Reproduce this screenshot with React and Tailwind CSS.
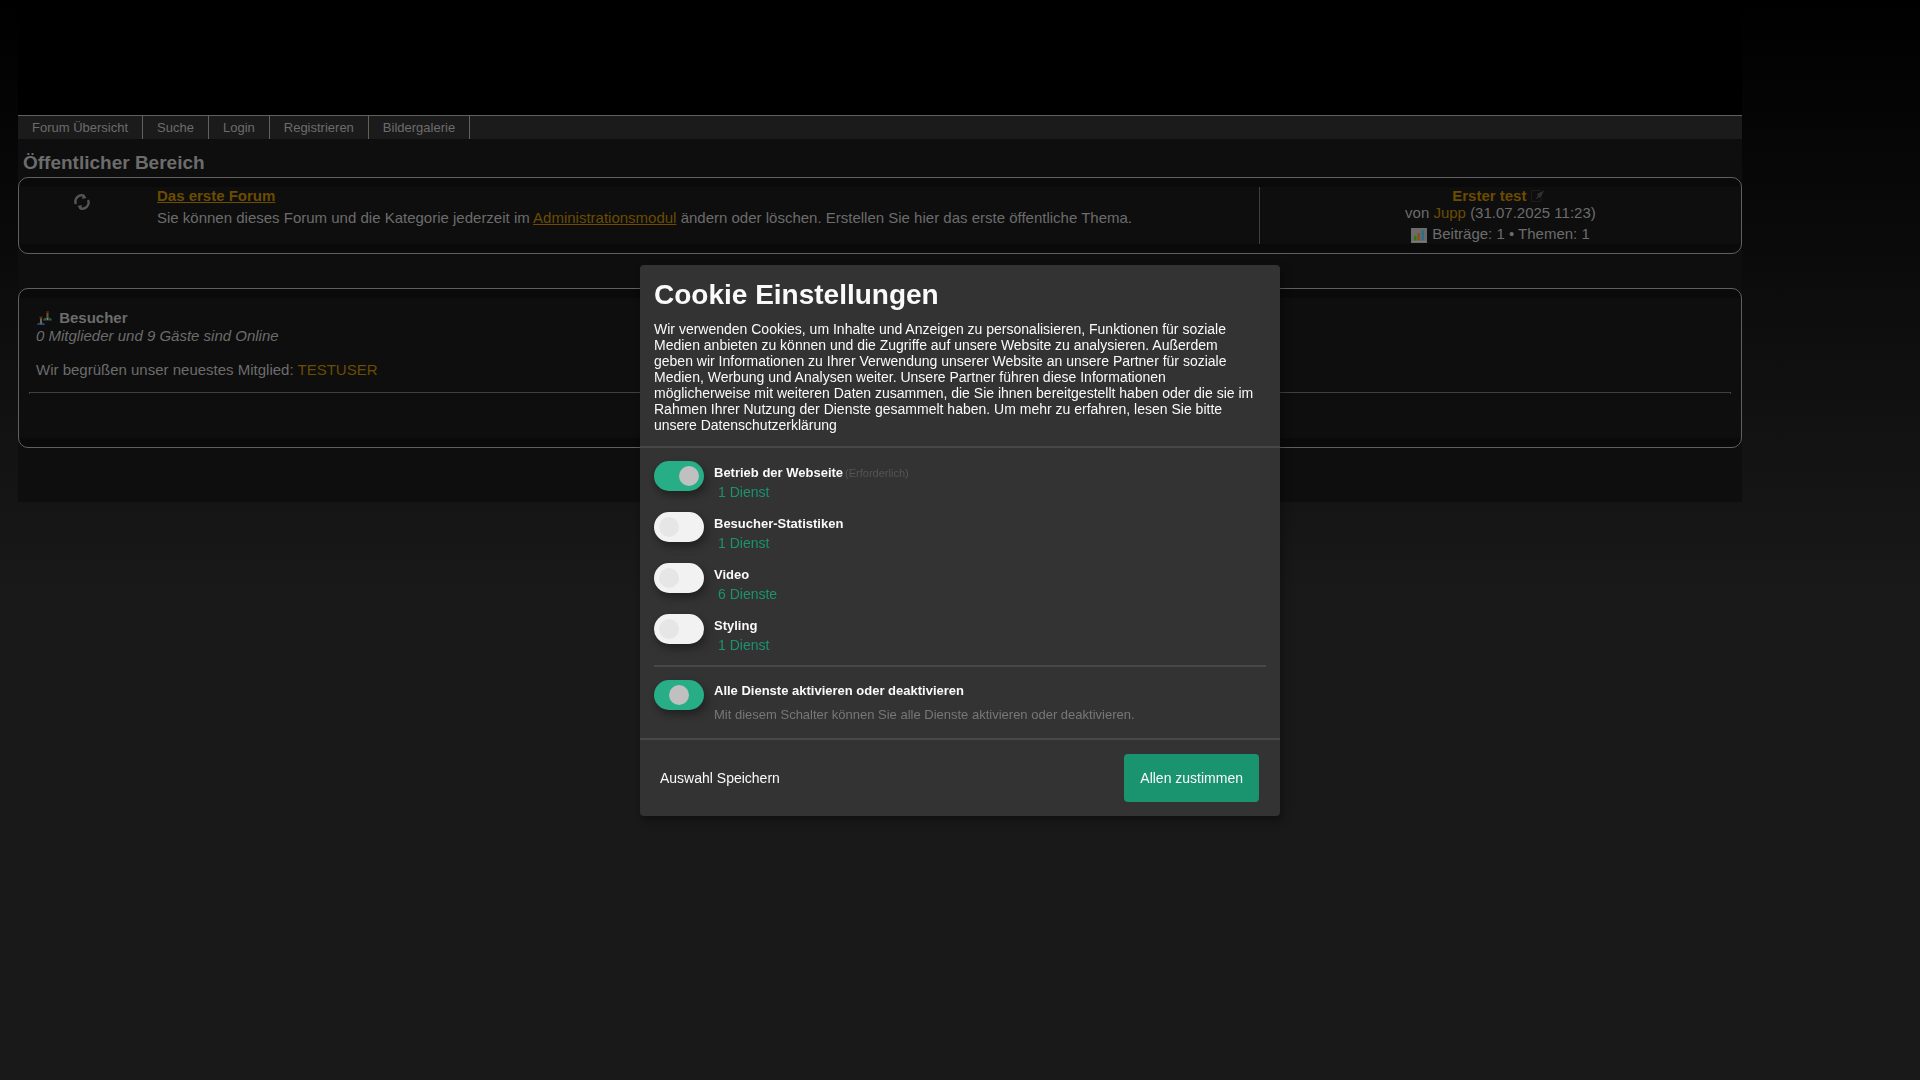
import { useState } from "react";

const navItems = ["Forum Übersicht", "Suche", "Login", "Registrieren", "Bildergalerie"];

const purposes = [
  { id: "operation", title: "Betrieb der Webseite", services: "1 Dienst", required: true },
  { id: "statistics", title: "Besucher-Statistiken", services: "1 Dienst" },
  { id: "video", title: "Video", services: "6 Dienste" },
  { id: "styling", title: "Styling", services: "1 Dienst" },
];

function RefreshIcon() {
  return (
    <svg width="16" height="16" viewBox="0 0 16 16" fill="none" stroke="#555" strokeWidth="2.4" aria-hidden="true">
      <path d="M2 10A6 6 0 0 1 10.500 2.300" />
      <path d="M14 6A6 6 0 0 1 5.500 13.700" />
      <path d="M9.500 0l3 4-4.500 1zM6.500 16l-3-4 4.500-1z" fill="#555" stroke="none" />
    </svg>
  );
}

function EditIcon() {
  return (
    <svg width="18" height="12" viewBox="0 0 18 12" className="inline-block align-[-1px]" aria-hidden="true">
      <path d="M9.500 .5H.5v11h9.500V8" fill="none" stroke="#1c1c1c" />
      <path d="M13 .5L6 4l1 1.500L4.500 9.500 8.500 7l1 1z" fill="#303030" />
    </svg>
  );
}

function ChartIcon() {
  return (
    <svg width="16" height="15" viewBox="0 0 16 15" className="mr-px inline-block align-[-4px]" aria-hidden="true">
      <path d="M0 0h16v15H0z" fill="#6b6b6b" />
      <path d="M1 13.500h14" stroke="#7c7c7c" />
      <path d="M3 8h2.500v4.500H3z" fill="#2a7d0c" />
      <path d="M6.500 5H9v7.500H6.500z" fill="#944a10" />
      <path d="M10.500 2H13v10.500h-2.500z" fill="#2b6f8a" />
    </svg>
  );
}

function VisitorsIcon() {
  return (
    <svg width="17" height="14" viewBox="0 0 17 14" className="inline-block align-[-2px]" aria-hidden="true">
      <path d="M7 9.500C7 7.500 9 6.500 11.500 6.500s4.500 1 4.500 3z" fill="#285a40" />
      <path d="M1 14c0-2 2-2.500 4-2.500S9 12 9 14z" fill="#1c4474" />
      <path d="M10.500 1.500h2V7h-2z" fill="#7a4c34" />
      <path d="M10 0h3v2h-3z" fill="#471e14" />
      <path d="M4 6.500h2V12H4z" fill="#80603a" />
      <path d="M3.500 5.500h3v2h-3z" fill="#4a3318" />
      <path d="M11 7h1v2h-1zM4.500 11.500h1v2h-1z" fill="#7c7c7c" />
    </svg>
  );
}

function Switch({ id, checked, half, disabled, onChange }) {
  return (
    <input
      id={id}
      type="checkbox"
      role="switch"
      checked={checked}
      disabled={disabled}
      onChange={onChange}
      className={`h-[30px] w-[50px] shrink-0 appearance-none rounded-full p-[5px] shadow-[0_4px_6px_rgba(0,0,0,0.2),5px_5px_10px_rgba(0,0,0,0.19)] before:block before:size-5 before:rounded-full ${
        checked || half ? "bg-[#27ae86] before:bg-[#c0c0c0]" : "bg-[#f2f2f2] before:bg-[#e6e6e6]"
      } ${half ? "before:ml-[10px]" : checked ? "before:ml-[20px]" : ""}`}
    />
  );
}

function CookieModal() {
  const [enabled, setEnabled] = useState({ operation: true });

  const toggle = (id) => setEnabled({ ...enabled, [id]: !enabled[id] });
  const count = purposes.filter((p) => enabled[p.id]).length;
  const all = count === purposes.length;
  const acceptAll = () => setEnabled(Object.fromEntries(purposes.map((p) => [p.id, true])));

  return (
    <div className="fixed inset-0 flex items-center justify-center">
      <div
        role="dialog"
        aria-labelledby="cookie-title"
        className="w-full max-w-[640px] rounded bg-[#333] text-sm text-[#fafafa] shadow-[0_4px_6px_rgba(0,0,0,0.2),5px_5px_10px_rgba(0,0,0,0.19)]"
      >
        <div className="border-b-2 border-[#484848] px-[14px] pt-[14px] pb-[13px]">
          <h1 id="cookie-title" className="text-[28px] leading-8 font-bold">
            Cookie Einstellungen
          </h1>
          <p className="mt-[10px] pr-[10px] leading-4">
            Wir verwenden Cookies, um Inhalte und Anzeigen zu personalisieren, Funktionen für soziale Medien anbieten
            zu können und die Zugriffe auf unsere Website zu analysieren. Außerdem geben wir Informationen zu Ihrer
            Verwendung unserer Website an unsere Partner für soziale Medien, Werbung und Analysen weiter. Unsere
            Partner führen diese Informationen möglicherweise mit weiteren Daten zusammen, die Sie ihnen bereitgestellt
            haben oder die sie im Rahmen Ihrer Nutzung der Dienste gesammelt haben. Um mehr zu erfahren, lesen Sie
            bitte unsere Datenschutzerklärung
          </p>
        </div>

        <div className="border-b-2 border-[#484848] px-[14px] pt-[13px] pb-[15px]">
          <ul>
            {purposes.map((p) => (
              <li key={p.id} className="flex h-[51px] gap-[10px]">
                <Switch
                  id={p.id}
                  checked={!!enabled[p.id]}
                  disabled={p.required}
                  onChange={() => toggle(p.id)}
                />
                <div className="pt-1">
                  <label htmlFor={p.id} className="block text-[13px] leading-4 font-bold">
                    {p.title}
                    {p.required && <span className="pl-[2px] text-[11px] font-normal text-[#555]">(Erforderlich)</span>}
                  </label>
                  <a href="#" className="mt-[2px] ml-1 block leading-[18px] text-[#1a936f]">
                    {p.services}
                  </a>
                </div>
              </li>
            ))}
          </ul>
          <div className="flex gap-[10px] border-t-2 border-[#484848] pt-[13px]">
            <Switch
              id="all"
              checked={all}
              half={count > 0 && !all}
              onChange={() => (all ? setEnabled({ operation: true }) : acceptAll())}
            />
            <div className="pt-[3px] text-[13px]">
              <label htmlFor="all" className="block leading-4 font-bold">
                Alle Dienste aktivieren oder deaktivieren
              </label>
              <p className="mt-2 leading-4 text-[#777]">
                Mit diesem Schalter können Sie alle Dienste aktivieren oder deaktivieren.
              </p>
            </div>
          </div>
        </div>

        <div className="flex items-center justify-between py-[14px] pr-[21px] pl-5">
          <button type="button">Auswahl Speichern</button>
          <button type="button" onClick={acceptAll} className="h-12 rounded bg-[#1a936f] px-4">
            Allen zustimmen
          </button>
        </div>
      </div>
    </div>
  );
}

export default function App() {
  return (
    <div className="min-h-screen bg-[#191919] bg-[linear-gradient(#000,#191919_600px)] font-['Liberation_Sans',Arial,sans-serif] text-[15px] leading-[17px] text-[#6c6c6c]">
      <div className="mr-[178px] ml-[18px] bg-[#0e0e0e] pb-[54px]">
        <header className="h-[115px] bg-black" />
        <nav className="flex h-6 border-t border-[#606060] bg-[#1b1b1b] text-[13px]">
          {navItems.map((item) => (
            <a key={item} href="#" className="flex items-center border-r border-[#606060] px-[14px]">
              {item}
            </a>
          ))}
        </nav>

        <h2 className="pt-[13px] pb-[3px] pl-[5px] text-[19px] leading-[22px] font-bold">Öffentlicher Bereich</h2>

        <section className="rounded-[10px] border border-[#606060] bg-[#0a0a0a] py-[9px]">
          <div className="flex h-[57px] bg-[#0e0e0e]">
            <div className="flex w-[126px] justify-center pt-[7px]">
              <RefreshIcon />
            </div>
            <div className="flex-1 pl-3">
              <a href="#" className="font-bold text-[#6b4c00] underline">
                Das erste Forum
              </a>
              <p className="mt-[5px]">
                Sie können dieses Forum und die Kategorie jederzeit im{" "}
                <a href="#" className="text-[#6b4c00] underline">
                  Administrationsmodul
                </a>{" "}
                ändern oder löschen. Erstellen Sie hier das erste öffentliche Thema.
              </p>
            </div>
            <div className="w-[28%] border-l border-[#404040] text-center">
              <p>
                <a href="#" className="font-bold text-[#6b4c00]">
                  Erster test
                </a>{" "}
                <EditIcon />
              </p>
              <p>
                von{" "}
                <a href="#" className="text-[#6b4c00]">
                  Jupp
                </a>{" "}
                (31.07.2025 11:23)
              </p>
              <p className="mt-1">
                <ChartIcon /> Beiträge: 1 • Themen: 1
              </p>
            </div>
          </div>
        </section>

        <section className="mt-[34px] rounded-[10px] border border-[#606060] bg-[#0a0a0a] py-[9px]">
          <div className="h-[140px] bg-[#0e0e0e] px-[10px] pt-[11px]">
            <div className="px-[7px]">
              <h3 className="font-bold">
                <VisitorsIcon /> <span className="pl-[2px]">Besucher</span>
              </h3>
              <p className="mt-px italic">0 Mitglieder und 9 Gäste sind Online</p>
              <p className="mt-[17px]">
                Wir begrüßen unser neuestes Mitglied:{" "}
                <a href="#" className="text-[#6b4c00]">
                  TESTUSER
                </a>
              </p>
            </div>
            <hr className="mt-[14px] h-[2px] border-x border-t border-[#404040]" />
          </div>
        </section>
      </div>

      <CookieModal />
    </div>
  );
}
